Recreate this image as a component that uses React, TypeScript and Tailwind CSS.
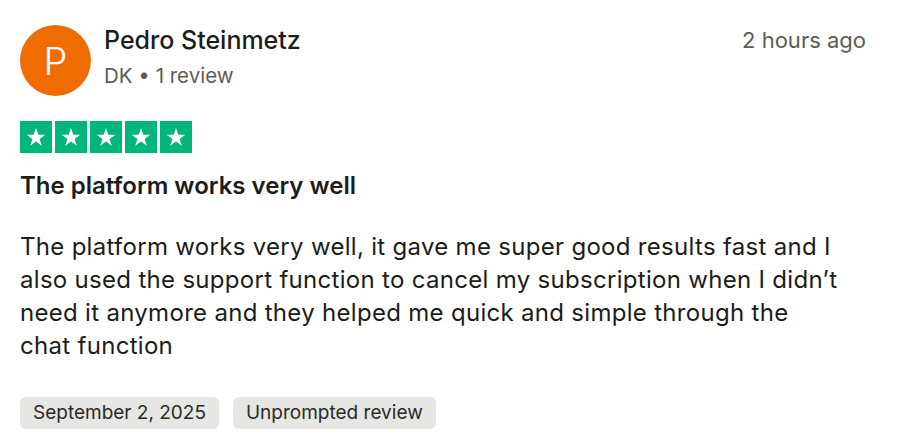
import { Fragment } from "react";

const body = [
  "The platform works very well, it gave me super good results fast and I",
  "also used the support function to cancel my subscription when I didn’t",
  "need it anymore and they helped me quick and simple through the",
  "chat function",
];

function Star() {
  return (
    <div className="w-8 h-8 bg-[#00b67a] flex items-center justify-center">
      <svg viewBox="0 0 24 24" className="w-[22px] h-[22px]">
        <path
          d="M12 2.2l2.45 7.35h7.75l-6.27 4.55 2.4 7.4L12 16.9l-6.33 4.6 2.4-7.4L1.8 9.55h7.75z"
          fill="#fff"
        />
      </svg>
    </div>
  );
}

export default function App() {
  return (
    <main className="w-[904px] h-[446px] bg-white px-5 pt-[25px] text-[#1c1c1a] font-['Inter',sans-serif]">
      <header className="flex items-start">
        <div className="w-[71px] h-[71px] rounded-full bg-[#ee6c00] flex items-center justify-center shrink-0">
          <span className="text-white text-[38px] font-light leading-none">P</span>
        </div>
        <div className="ml-[13px] flex-1">
          <div className="text-[25px] font-medium leading-[30px]">Pedro Steinmetz</div>
          <div className="mt-[7px] text-[20.5px] leading-[28px] text-[#5c5c58]">DK • 1 review</div>
        </div>
        <div className="mr-[18px] mt-[1px] text-[22px] leading-[28px] text-[#5c5c58]">2 hours ago</div>
      </header>

      <div className="mt-[25px] flex gap-[3px]">
        {[0, 1, 2, 3, 4].map((i) => (
          <Star key={i} />
        ))}
      </div>

      <h2 className="mt-[17px] text-[24px] font-semibold leading-[32px]">
        The platform works very well
      </h2>

      <p className="mt-[28px] text-[24px] leading-[33px] tracking-[0.3px]">
        {body.map((line, i) => (
          <Fragment key={i}>
            {line}
            {i < body.length - 1 && <br />}
          </Fragment>
        ))}
      </p>

      <div className="mt-[35px] flex gap-[14px]">
        {["September 2, 2025", "Unprompted review"].map((t) => (
          <span
            key={t}
            className="h-8 px-[13px] rounded-[6px] bg-[#e6e6e4] text-[19px] leading-8 text-[#2a2a28]"
          >
            {t}
          </span>
        ))}
      </div>
    </main>
  );
}
